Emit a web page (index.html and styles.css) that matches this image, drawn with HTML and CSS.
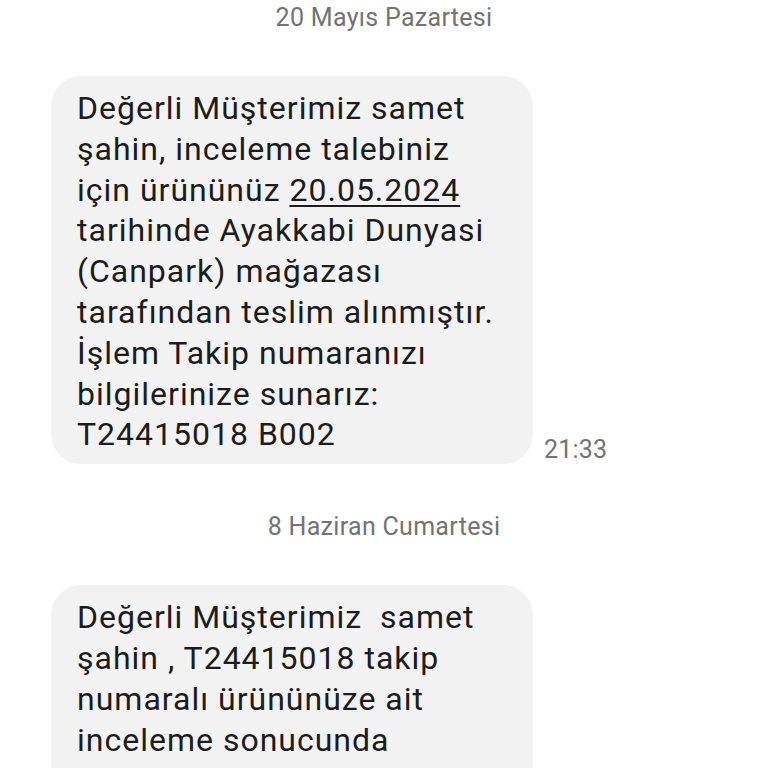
FILE: index.html
```html
<!DOCTYPE html>
<html lang="tr">
<head>
  <meta charset="UTF-8" />
  <meta name="viewport" content="width=device-width, initial-scale=1.0" />
  <title>Mesajlar</title>
  <link rel="stylesheet" href="styles.css">
</head>
<body>
  <main class="thread">
    <div class="day day-first">20 Mayıs Pazartesi</div>
    <div class="msg">
      <div class="bubble">
        Değerli Müşterimiz samet<br>
        şahin, inceleme talebiniz<br>
        için ürününüz <span class="link">20.05.2024</span><br>
        tarihinde Ayakkabi Dunyasi<br>
        (Canpark) mağazası<br>
        tarafından teslim alınmıştır.<br>
        İşlem Takip numaranızı<br>
        bilgilerinize sunarız:<br>
        T24415018 B002
      </div>
      <span class="time">21:33</span>
    </div>

    <div class="day">8 Haziran Cumartesi</div>
    <div class="msg">
      <div class="bubble">
        Değerli Müşterimiz&nbsp; samet<br>
        şahin , T24415018 takip<br>
        numaralı ürününüze ait<br>
        inceleme sonucunda<br>
        yapılan tespitler doğrultusunda<br>
        talebiniz değerlendirilmiştir.
      </div>
    </div>
  </main>
</body>
</html>
```

FILE: styles.css
```css
html, body {
  overflow: hidden;
}

body {
  margin: 0;
  background-color: #ffffff;
  font-family: Roboto, "Noto Sans", sans-serif;
  color: #1c1c1c;
}

.day {
  margin-top: 45px;
  text-align: center;
  font-size: 25px;
  letter-spacing: 0.3px;
  line-height: 36px;
  color: #737373;
}

.day-first {
  margin-top: 0;
}

.msg {
  display: flex;
  align-items: flex-end;
  gap: 11px;
  margin-top: 40px;
  padding-left: 51px;
}

.bubble {
  box-sizing: border-box;
  width: 482px;
  padding: 12px 26px 9px;
  background-color: #f2f2f2;
  border-radius: 30px;
  font-size: 32px;
  letter-spacing: 1px;
  line-height: 40.8px;
  white-space: nowrap;
}

.link {
  text-decoration: underline;
  text-decoration-thickness: 2px;
  text-underline-offset: 4px;
}

.time {
  font-size: 25px;
  letter-spacing: 0.2px;
  line-height: 28px;
  color: #737373;
}
```
